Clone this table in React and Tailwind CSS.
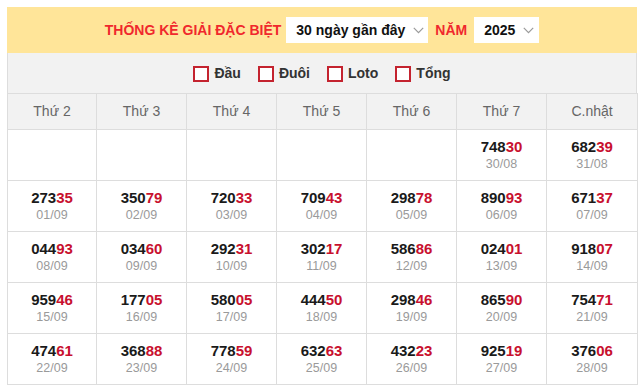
import React from "react";

const rows = [
  [null, null, null, null, null, ["74830", "30/08"], ["68239", "31/08"]],
  [["27335", "01/09"], ["35079", "02/09"], ["72033", "03/09"], ["70943", "04/09"], ["29878", "05/09"], ["89093", "06/09"], ["67137", "07/09"]],
  [["04493", "08/09"], ["03460", "09/09"], ["29231", "10/09"], ["30217", "11/09"], ["58686", "12/09"], ["02401", "13/09"], ["91807", "14/09"]],
  [["95946", "15/09"], ["17705", "16/09"], ["58005", "17/09"], ["44450", "18/09"], ["29846", "19/09"], ["86590", "20/09"], ["75471", "21/09"]],
  [["47461", "22/09"], ["36888", "23/09"], ["77859", "24/09"], ["63263", "25/09"], ["43223", "26/09"], ["92519", "27/09"], ["37606", "28/09"]],
];

const days = ["Thứ 2", "Thứ 3", "Thứ 4", "Thứ 5", "Thứ 6", "Thứ 7", "C.nhật"];

function Chevron() {
  return (
    <svg width="11" height="7" viewBox="0 0 11 7" fill="none" className="ml-[8px]">
      <path d="M0.8 0.8 L5.5 5.6 L10.2 0.8" stroke="#9a9a9a" strokeWidth="1.2" />
    </svg>
  );
}

function Check({ label }) {
  return (
    <div className="flex items-center gap-[5px]">
      <span className="block w-[16px] h-[16px] border-2 border-[#c4232f] bg-white" />
      <span className="text-[14px] font-bold text-[#333]">{label}</span>
    </div>
  );
}

export default function App() {
  return (
    <div className="pt-[7px] pl-[7px] bg-white min-h-[390px]" style={{ fontFamily: '"Liberation Sans", Arial, sans-serif' }}>
      <div className="w-[630px]">
        <div className="h-[46px] bg-[#ffe599] flex items-center justify-center">
          <span className="text-[14px] font-bold text-[#f0282d] mr-[5px]">THỐNG KÊ GIẢI ĐẶC BIỆT</span>
          <div className="h-[26px] w-[142px] bg-white flex items-center pl-[10px] text-[14px] font-bold text-[#111]">
            30 ngày gần đây
            <Chevron />
          </div>
          <span className="text-[14px] font-bold text-[#f0282d] mx-[7px]">NĂM</span>
          <div className="h-[26px] w-[65px] bg-white flex items-center pl-[10px] text-[14px] font-bold text-[#111]">
            2025
            <Chevron />
          </div>
        </div>
        <div className="h-[40px] bg-[#f2f2f2] border-l border-r border-[#ddd] flex items-center justify-center gap-[17px] pt-[1px]">
          <Check label="Đầu" />
          <Check label="Đuôi" />
          <Check label="Loto" />
          <Check label="Tổng" />
        </div>
        <table className="w-full table-fixed border-collapse">
          <colgroup>
            <col className="w-[89px]" />
            <col className="w-[90px]" />
            <col className="w-[90px]" />
            <col className="w-[90px]" />
            <col className="w-[90px]" />
            <col className="w-[90px]" />
            <col className="w-[91px]" />
          </colgroup>
          <thead>
            <tr className="h-[36px] bg-[#f2f2f2]">
              {days.map((d) => (
                <th key={d} className="border border-[#ddd] font-normal text-[14px] text-[#666] text-center">
                  {d}
                </th>
              ))}
            </tr>
          </thead>
          <tbody>
            {rows.map((r, i) => (
              <tr key={i} className="h-[51px]">
                {r.map((c, j) => (
                  <td key={j} className="border border-[#ddd] text-center align-middle p-0">
                    {c && (
                      <div className="flex flex-col items-center leading-none">
                        <span className="text-[15px] font-bold text-[#1a1a1a]">
                          {c[0].slice(0, 3)}
                          <span className="text-[#c8102e]">{c[0].slice(3)}</span>
                        </span>
                        <span className="text-[12.5px] text-[#9a9a9a] mt-[4px]">{c[1]}</span>
                      </div>
                    )}
                  </td>
                ))}
              </tr>
            ))}
          </tbody>
        </table>
      </div>
    </div>
  );
}
